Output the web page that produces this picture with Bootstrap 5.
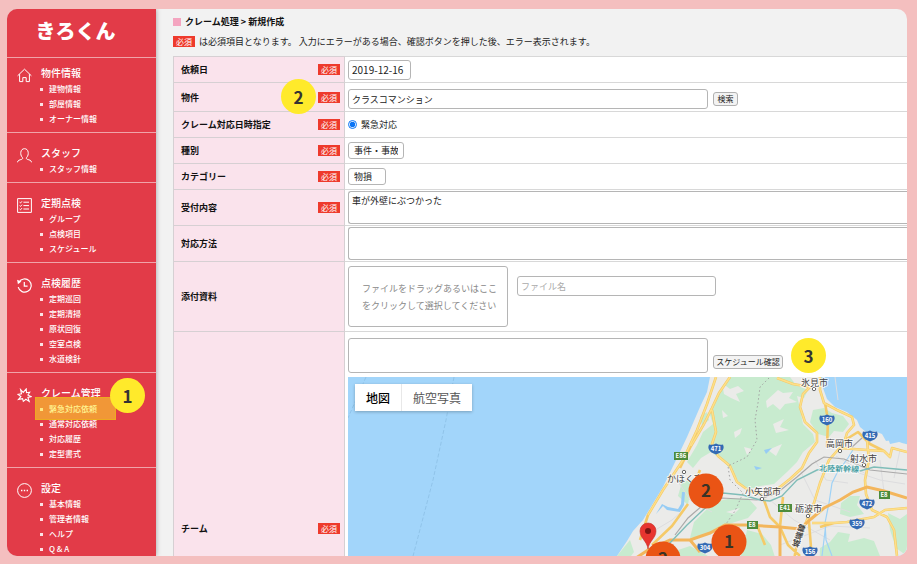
<!DOCTYPE html>
<html lang="ja">
<head>
<meta charset="utf-8">
<meta name="viewport" content="width=device-width, initial-scale=1">
<title>きろくん - クレーム処理</title>
<link href="https://cdn.jsdelivr.net/npm/bootstrap@5.3.0/dist/css/bootstrap.min.css" rel="stylesheet">
<style>
body{background:#f4bfbf;font-family:"Noto Sans CJK JP",sans-serif;font-size:9px;line-height:15px;color:#222;height:100vh;padding:9px 10px 8px 7px}
.frame{border-radius:10px;background:#f2f2f2}
.side{width:149px;background:#e23b48;box-shadow:0 0 5px rgba(0,0,0,.35);z-index:1}
.side a{color:#fff;text-decoration:none}
.logo{height:49px;font-size:20px;font-weight:900;padding:0 12px 5px 0;border-bottom:1px solid #f0a3a9}
.sec{padding:12px 0 6px 10px;gap:9px;border-bottom:1px solid #f0a3a9}
.sec.first{padding-top:7px}
.sec:last-child{border-bottom:0}
.sec>svg{width:15px;height:15px;margin-top:3px;fill:none;stroke:#fff;stroke-width:1;flex:none}
.sec h2{font-size:10px;line-height:16px;font-weight:500;margin:0;color:#fff}
.sec li{font-size:8px;line-height:15px;font-weight:500;padding-left:8px;position:relative}
.sec li::before{content:"";position:absolute;left:-1px;top:7px;width:3px;height:3px;background:#fbe3e5}
.hl::after{content:"";position:absolute;left:-6px;top:-4px;width:81px;height:23px;background:rgba(255,235,40,.52);border:1px solid #edab20;z-index:1;pointer-events:none}
.step{width:35px;height:35px;border-radius:50%;background:#ffea2b;color:#333;font-size:17px;font-weight:700;flex:none}
.step-one{position:absolute;left:69px;top:-7px;z-index:2}
.step-two{position:absolute;right:28px;top:-4px;z-index:2}
.head{height:47px;padding:5px 0 0 17px}
.head h1{font-size:9px;font-weight:700;line-height:15px;color:#111}
.note{margin-top:5px}
.sq{width:8px;height:8px;background:#f4a5c0}
.req{background:#ee3a2c;color:#fff;font-size:8px;line-height:11px;width:22px;height:11px;text-align:center;font-weight:400;flex:none}
.form-grid{margin:0 0 0 17px;width:calc(100% - 17px);border-collapse:collapse;background:#fff}
.form-grid tr{height:26px}
.form-grid tr.r29{height:29px}
.form-grid tr.r36{height:36px}
.form-grid tr.r70{height:70px}
.form-grid th{position:relative;width:171px;background:#fae3ec;border:1px solid #d6d0d3;padding:0 4px 0 7px;color:#111;font-weight:700}
.form-grid td{border-top:1px solid #d8d8d8;padding:0 0 0 3px}
.fld{display:block;border:1px solid #b5b5b5;border-radius:3px;background:#fff;font-size:9px;line-height:15px;color:#222;padding:0 3px;resize:none;appearance:none;font-family:inherit}
.fld::placeholder{color:#aaa}
.open-end{border-right:0;border-radius:3px 0 0 3px}
.date{width:63px;height:20px;font-size:10px}
.long{width:360px;height:20px}
.name{width:199px;height:20px;margin:10px 0 0 9px}
.pick{height:17px;padding:0 5px}
.pick-a{width:56px}.pick-b{width:38px}
.area{height:33px;padding-top:1px}
.teambar{padding:6px 0 4px}
.team{height:35px;width:360px}
.radio{width:9px;height:9px;margin:0;accent-color:#0a74f5}
.mini{border:1px solid #b0b0b0;border-radius:3px;background:#f3f3f3;font-size:8px;line-height:12px;height:14px;padding:0;color:#222;margin-left:5px}
.find{width:25px}.sched{width:70px}
.drop{width:160px;height:61px;border:1px solid #b5b5b5;border-radius:3px;background:#fff;color:#888;line-height:17px;padding:0 0 0 13px}
.map{height:340px;background:#a2d5fa}
.map svg{display:block;width:100%;height:100%}
.maptype{position:absolute;left:7px;top:7px;box-shadow:0 1px 3px rgba(0,0,0,.25);background:#fff}
.maptype button{border:0;background:#fff;font-size:12px;line-height:27px;height:27px;padding:0 11px;color:#555}
.maptype button+button{border-left:1px solid #e8e8e8}
.maptype .on{color:#000;font-weight:500}
</style>
<script src="https://cdn.jsdelivr.net/npm/bootstrap@5.3.0/dist/js/bootstrap.bundle.min.js"></script>
</head>
<body class="m-0">
<div class="frame d-flex h-100 overflow-hidden">
  <nav class="side flex-shrink-0" aria-label="メニュー">
    <a href="#" class="logo d-flex align-items-center justify-content-center">きろくん</a>
    <section class="sec first d-flex">
      <svg viewBox="0 0 15 15"><path d="M.6 7.8 7.5 1.2 14.4 7.8M2.6 6.2V13.6H5.8V9.6H9.2V13.6H12.4V6.2"/></svg>
      <div><h2>物件情報</h2>
      <ul class="list-unstyled m-0"><li><a href="#">建物情報</a></li><li><a href="#">部屋情報</a></li><li><a href="#">オーナー情報</a></li></ul></div>
    </section>
    <section class="sec d-flex">
      <svg viewBox="0 0 15 15"><path d="M.5 14.3C.7 12.2 2.6 12 4.6 11.4 5.6 11 5.9 10.4 5.4 9.5 3.9 8 3.6 6 3.8 4.3 4.1 1.9 5.6.7 7.5.7S10.9 1.9 11.2 4.3C11.4 6 11.1 8 9.6 9.5 9.1 10.4 9.4 11 10.4 11.4 12.4 12 14.3 12.2 14.5 14.3"/></svg>
      <div><h2>スタッフ</h2>
      <ul class="list-unstyled m-0"><li><a href="#">スタッフ情報</a></li></ul></div>
    </section>
    <section class="sec d-flex">
      <svg viewBox="0 0 15 15"><path d="M.6.6H14.4V14.4H.6ZM6.4 4.2H12M6.4 7.6H12M6.4 11H12M2.6 4.2 3.5 5 5 3.3M2.6 7.6 3.5 8.4 5 6.7M2.6 11 3.5 11.8 5 10.1"/></svg>
      <div><h2>定期点検</h2>
      <ul class="list-unstyled m-0"><li><a href="#">グループ</a></li><li><a href="#">点検項目</a></li><li><a href="#">スケジュール</a></li></ul></div>
    </section>
    <section class="sec d-flex">
      <svg viewBox="0 0 15 15"><path d="M1.9 4.2A6.6 6.6 0 1 1 1.2 9.2M7.3 4V8.2H10.6" stroke-width="1.2"/><path d="M.1 1.8 4.4 3.6.9 6.2Z" fill="#fff" stroke="none"/></svg>
      <div><h2>点検履歴</h2>
      <ul class="list-unstyled m-0"><li><a href="#">定期巡回</a></li><li><a href="#">定期清掃</a></li><li><a href="#">原状回復</a></li><li><a href="#">空室点検</a></li><li><a href="#">水道検針</a></li></ul></div>
    </section>
    <section class="sec d-flex">
      <svg viewBox="0 0 15 15"><path d="M3.6 1.6 6.2 4.4 9.2.9 9.5 4.7 12.7 4.2 10.9 7 14.2 8.6 10.9 9.5 12.2 13.4 8.9 11.3 6.3 13.4 5.6 10.6 1.5 11.4 3.9 8.5 1 6.4 4.5 5.8Z" stroke-width="1.1"/></svg>
      <div class="position-relative"><h2>クレーム管理</h2>
      <span class="step step-one d-flex align-items-center justify-content-center">1</span>
      <ul class="list-unstyled m-0"><li class="hl"><a href="#">緊急対応依頼</a></li><li><a href="#">通常対応依頼</a></li><li><a href="#">対応履歴</a></li><li><a href="#">定型書式</a></li></ul></div>
    </section>
    <section class="sec d-flex">
      <svg viewBox="0 0 15 15"><circle cx="7.5" cy="7.5" r="6.9"/><path d="M4 7.5H5.4M6.8 7.5H8.2M9.6 7.5H11" stroke-width="1.4"/></svg>
      <div><h2>設定</h2>
      <ul class="list-unstyled m-0"><li><a href="#">基本情報</a></li><li><a href="#">管理者情報</a></li><li><a href="#">ヘルプ</a></li><li><a href="#">Q &amp; A</a></li></ul></div>
    </section>
  </nav>

  <main class="flex-grow-1 overflow-hidden">
    <header class="head d-flex flex-column">
      <div class="d-flex align-items-center gap-1"><span class="sq"></span><h1 class="m-0">クレーム処理 &gt; 新規作成</h1></div>
      <div class="note d-flex align-items-center gap-1 text-nowrap"><span class="req">必須</span><span>は必須項目となります。 入力にエラーがある場合、確認ボタンを押した後、エラー表示されます。</span></div>
    </header>
    <table class="form-grid">
      <tr><th scope="row"><div class="d-flex align-items-center justify-content-between"><label for="f1">依頼日</label><span class="req">必須</span></div></th>
        <td><input id="f1" class="fld date" type="text" value="2019-12-16"></td></tr>
      <tr class="r29"><th scope="row"><div class="d-flex align-items-center justify-content-between"><label for="f2">物件</label><span class="req">必須</span></div><span class="step step-two d-flex align-items-center justify-content-center">2</span></th>
        <td><div class="d-flex align-items-center pt-1"><input id="f2" class="fld long" type="text" value="クラスコマンション"><button type="button" class="mini find">検索</button></div></td></tr>
      <tr><th scope="row"><div class="d-flex align-items-center justify-content-between"><span>クレーム対応日時指定</span><span class="req">必須</span></div></th>
        <td><div class="d-flex align-items-center gap-1"><input id="f3" class="radio" type="radio" name="when" checked><label for="f3">緊急対応</label></div></td></tr>
      <tr><th scope="row"><div class="d-flex align-items-center justify-content-between"><label for="f4">種別</label><span class="req">必須</span></div></th>
        <td><select id="f4" class="fld pick pick-a"><option>事件・事故</option></select></td></tr>
      <tr><th scope="row"><div class="d-flex align-items-center justify-content-between"><label for="f5">カテゴリー</label><span class="req">必須</span></div></th>
        <td><select id="f5" class="fld pick pick-b"><option>物損</option></select></td></tr>
      <tr class="r36"><th scope="row"><div class="d-flex align-items-center justify-content-between"><label for="f6">受付内容</label><span class="req">必須</span></div></th>
        <td><textarea id="f6" class="fld area open-end w-100">車が外壁にぶつかった</textarea></td></tr>
      <tr class="r36"><th scope="row"><label for="f7">対応方法</label></th>
        <td><textarea id="f7" class="fld area open-end w-100"></textarea></td></tr>
      <tr class="r70"><th scope="row"><label for="f8">添付資料</label></th>
        <td><div class="d-flex align-items-start"><button type="button" class="drop text-start">ファイルをドラッグあるいはここ<br>をクリックして選択してください</button><input id="f8" class="fld name" type="text" placeholder="ファイル名"></div></td></tr>
      <tr><th scope="row"><div class="d-flex align-items-center justify-content-between"><label for="f9">チーム</label><span class="req">必須</span></div></th>
        <td class="pb-2">
          <div class="teambar d-flex align-items-end"><textarea id="f9" class="fld team"></textarea><button type="button" class="mini sched mb-1">スケジュール確認</button><span class="step ms-2 d-flex align-items-center justify-content-center">3</span></div>
          <div class="map position-relative overflow-hidden">
            <svg viewBox="348 377 559 340" preserveAspectRatio="xMinYMin slice" font-family="Noto Sans CJK JP, sans-serif">
              <path d="M366 377 348 418M454 377 446 420 433 480 412 560" fill="none" stroke="#8bbfe4" stroke-width=".8" stroke-dasharray="4 2"/>
              <path d="M710 377 707 392 700 407 687 437 677 458 663 487 643 520 633 531 627 541 617 556 590 600 560 720H910V445L902 443 894 440 886 441 882 434 874 431 866 432 860 427 857 420 847 412 835 407 827 399 823 388 820 377Z" fill="#ebebe9"/>
              <g fill="#c8ebcf">
                <path d="M729 377 790 377 796 385 808 390 804 398 797 396 800 408 803 424 813 434 815 442 803 452 797 462 787 472 774 484 760 486 750 489 740 484 733 472 722 460 711 452 701 458 693 468 687 462 697 445 703 432 713 424 709 412 717 396Z"/>
                <path d="M824 408 832 413 843 416 849 424 843 432 834 431 829 437 818 434 810 422 813 410Z"/>
                <path d="M704 512 714 502 728 499 748 498 757 508 748 518 735 522 718 528 702 536 690 538 694 522ZM747 530 762 534 771 545 776 560 740 560ZM672 552 690 546 708 556 710 570H672ZM617 556 630 540 634 552 628 560ZM841 503 850 496 860 496 857 505 864 514 850 517 840 514ZM820 548 830 542 838 532 850 534 848 542 864 538 874 541 880 556 900 560 900 720H815ZM888 513 900 519 907 514V556L896 548 890 530ZM682 482 692 480 688 505 678 496ZM700 417 707 412 709 420 702 426Z"/>
              </g>
              <g fill="#ebebe9">
                <path d="M722 383 730 389 738 386 744 391 736 394 740 402 731 398 724 394ZM766 401 778 390 783 393 793 392 789 398 797 402 785 404 780 410 773 404 767 408ZM734 432 742 428 740 434 735 438ZM744 447 752 449 747 455ZM722 410 728 416 723 418ZM773 424 784 419 780 427 789 430 776 433ZM768 450 782 444 776 456ZM726 512 740 508 734 514Z"/>
              </g>
              <path d="M888 438 898 436 899 442 890 444Z" fill="#a2d5fa"/>
              <path d="M656 514 663 506 667 510 680 512 684 505 685 492 682 492 681 504 678 509 668 507 662 504ZM764 450 772 448 766 454ZM754 466 762 468 756 470Z" fill="#96ccf4"/>
              <g fill="none" stroke="#dddddf" stroke-width="1">
                <path d="M676 478 690 500 712 512M835 377 838 400M770 500 794 520 830 540M800 470 815 500 850 512M850 470 880 480 905 484M880 460 885 500M780 545 830 526 870 528M900 450 894 478M652 532 672 520 688 506M815 460 826 480 848 483M836 456 866 474"/>
              </g>
              <path d="M832 556 826 540 825 523 829 503 832 483 837 473 848 458 854 448M826 523 822 556" fill="none" stroke="#9fd2f6" stroke-width="1.2"/>
              <g fill="none" stroke="#f5ca68" stroke-width="2.6" stroke-linejoin="round">
                <path d="M716 377 707 404 697 430 683 460 663 490 648 515 640 540M730 377 719 393 712 408 704 424 691 446 680 468M712 410 716 432 712 444 718 456 730 466 737 482 748 490 762 495M777 378 793 384 810 387 803 394 800 407 805 422 817 433 817 442 809 453 802 468 790 479 770 495M820 377 820 390 824 403 837 410 852 417 854 425 847 433 844 443 829 460 820 483 814 503 807 520 797 543 794 560M825 403 828 420 827 447M812 523 834 523 847 522 874 517 885 510 907 508M867 440 869 460 865 480 866 494 872 510 887 517 894 530 897 556M840 448 867 450 884 451 890 457 892 448 907 452M780 527 783 497M764 500 770 517 780 527 788 545 800 556M809 522 812 560M688 504 672 526 652 545M757 525 765 545M700 470 690 495M834 523 820 527M845 440 858 432 870 444 884 451"/>
              </g>
              <path d="M716 377 707 404 697 430 683 460 663 490 648 515M730 377 719 393 712 408 704 424 691 446M712 410 716 432 712 444 718 456 730 466 737 482 748 490M777 378 793 384 810 387 803 394 800 407 805 422 817 433 817 442 809 453 802 468 790 479 770 495M820 377 820 390 824 403 837 410 852 417 854 425 847 433 844 443 829 460 820 483 814 503 807 520 797 543M812 523 834 523 847 522 874 517 885 510 907 508M867 440 869 460 865 480 866 494 872 510 887 517 894 530 897 556M840 448 867 450 884 451 890 457 892 448 907 452" fill="none" stroke="#fde08a" stroke-width="1.400"/>
              <path d="M630 562 648 550 670 540 690 540 710 533 725 525 747 525 780 527 800 529 811 519 824 508 840 500 853 492 867 487 884 491 907 498M780 560 780 527M690 540 700 552" fill="none" stroke="#f3b65c" stroke-width="3"/>
              <path d="M757 500 777 493 797 477 812 464 824 457 844 459 870 470 907 474M675 535 688 518 703 505 722 498 757 500M852 447 862 438" fill="none" stroke="#aaa9a9" stroke-width="1.2"/>
              <path d="M668 545 687 525 703 510 723 493 743 495 760 500 770 501 782 496 797 480 817 470 840 467 860 471 874 467 907 470" fill="none" stroke="#7fbdb8" stroke-width="1.4"/>
              <path d="M769 378 760 387 758 403 755 420 757 440 747 457 728 466 730 480 743 493 735 511 726 524" fill="none" stroke="#a3a3a3" stroke-width="1" stroke-dasharray="1.5 2.5"/>
              <g fill="#fff" stroke="#666" stroke-width="1"><circle cx="684" cy="472" r="1.700"/><circle cx="762" cy="499" r="1.700"/><circle cx="814" cy="389" r="1.700"/><circle cx="840" cy="451" r="1.700"/><circle cx="864" cy="465" r="1.700"/><circle cx="808" cy="516" r="1.700"/></g>
              <g font-size="9" fill="#444" stroke="#fff" stroke-width="2" stroke-linejoin="round" paint-order="stroke" stroke-opacity=".7">
                <text x="667" y="482">かほく市</text><text x="745" y="495">小矢部市</text><text x="801" y="386">氷見市</text><text x="826" y="447">高岡市</text><text x="850" y="462">射水市</text><text x="795" y="512">砺波市</text>
                <text font-size="8" font-weight="500" fill="#35969b" transform="translate(819 471) rotate(2)">北陸新幹線</text>
                <text font-size="8" font-weight="700" transform="translate(798 548) rotate(-72)">城端線</text>
              </g>
              <defs><path id="shield" d="M-7-4.500Q-3.500-3.500 0-5.500 3.500-3.500 7-4.500 9 0 4.500 3.500L0 5.500-4.500 3.500Q-9 0-7-4.500Z"/></defs>
              <g fill="#346ab4"><use href="#shield" x="716" y="449"/><use href="#shield" x="827" y="420"/><use href="#shield" x="870" y="436"/><use href="#shield" x="867" y="504"/><use href="#shield" x="857" y="524"/><use href="#shield" x="810" y="552"/><use href="#shield" x="705" y="548"/></g>
              <g fill="#4d8b3c"><path d="M674 452h14v8h-14zM778 504h14v8h-14zM879 491h11v8h-11zM747 521h11v8h-11z"/></g>
              <g font-size="6" font-weight="700" fill="#fff" text-anchor="middle">
                <text x="716" y="451">471</text><text x="827" y="422">160</text><text x="870" y="438">415</text><text x="867" y="506">472</text><text x="857" y="526">359</text><text x="810" y="554">156</text><text x="705" y="550">304</text>
                <text x="681" y="458">E86</text><text x="785" y="510">E41</text><text x="884" y="497">E8</text><text x="752" y="527">E8</text>
              </g>
              <path d="M648 549C647 541 640 538 640 531A8 8 0 0 1 656 531C656 538 649 541 648 549Z" fill="#e8352f" stroke="#c5332c" stroke-width=".6"/><circle cx="648" cy="531" r="3" fill="#7c1512"/>
              <g fill="#ea5415"><circle cx="706" cy="491" r="17.500"/><circle cx="729" cy="542" r="17.500"/><circle cx="663" cy="559" r="17.500"/></g>
              <g font-size="17" font-weight="700" fill="#3a3326" text-anchor="middle"><text x="706" y="497">2</text><text x="729" y="548">1</text><text x="663" y="565">2</text></g>
            </svg>
            <div class="maptype d-flex"><button type="button" class="on">地図</button><button type="button">航空写真</button></div>
          </div>
        </td></tr>
    </table>
  </main>
</div>
</body>
</html>
